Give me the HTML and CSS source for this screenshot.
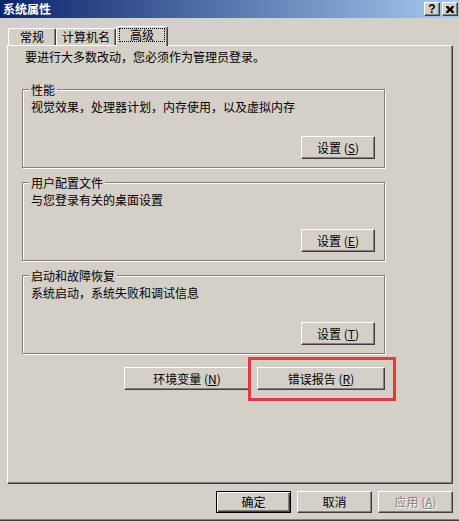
FILE: index.html
```html
<!DOCTYPE html>
<html lang="zh-CN">
<head>
  <meta charset="UTF-8">
  <title>系统属性</title>
  <link rel="stylesheet" href="styles.css">
</head>
<body>
  <div class="window">
    <div class="titlebar">
      <span class="title">系统属性</span>
      <div class="caption-btns">
        <span class="cap-btn help">?</span>
        <span class="cap-btn">
          <svg width="8" height="7" viewBox="0 0 8 7">
            <path d="M0 0h2l2 2 2-2h2v1l-2 2.5 2 2.5v1h-2l-2-2-2 2h-2v-1l2-2.5-2-2.5z" fill="#000"/>
          </svg>
        </span>
      </div>
    </div>

    <div class="tabs">
      <div class="tab tab-general">常规</div>
      <div class="tab tab-computer">计算机名</div>
      <div class="tab tab-advanced active"><span class="focus">高级</span></div>
    </div>

    <div class="panel">
      <p class="intro">要进行大多数改动，您必须作为管理员登录。</p>

      <fieldset class="group">
        <legend>性能</legend>
        <p>视觉效果，处理器计划，内存使用，以及虚拟内存</p>
        <button class="btn set-btn">设置 (<u>S</u>)</button>
      </fieldset>

      <fieldset class="group">
        <legend>用户配置文件</legend>
        <p>与您登录有关的桌面设置</p>
        <button class="btn set-btn">设置 (<u>E</u>)</button>
      </fieldset>

      <fieldset class="group">
        <legend>启动和故障恢复</legend>
        <p>系统启动，系统失败和调试信息</p>
        <button class="btn set-btn">设置 (<u>T</u>)</button>
      </fieldset>

      <div class="extra-row">
        <button class="btn env-btn">环境变量 (<u>N</u>)</button>
        <span class="marked">
          <button class="btn report-btn">错误报告 (<u>R</u>)</button>
          <span class="highlight"></span>
        </span>
      </div>
    </div>

    <div class="actions">
      <button class="btn action default">确定</button>
      <button class="btn action">取消</button>
      <button class="btn action disabled">应用 (<u>A</u>)</button>
    </div>
  </div>
</body>
</html>
```

FILE: styles.css
```css
body {
  margin: 0;
  background: #D4D0C8;
  font-family: "Noto Sans CJK SC", "Liberation Sans", sans-serif;
  font-size: 12px;
  color: #000;
}

.window {
  box-sizing: border-box;
  height: 521px;
  display: flex;
  flex-direction: column;
  border-bottom: 1px solid #404040;
  box-shadow: inset 0 -1px #808080;
}

.titlebar {
  height: 18px;
  display: flex;
  align-items: center;
  justify-content: space-between;
  padding: 0 1px 0 3px;
  background: linear-gradient(to right, #0A246A, #A6CAF0);
}

.title {
  color: #fff;
  font-weight: bold;
  line-height: 18px;
}

.caption-btns {
  display: flex;
  gap: 2px;
}

.cap-btn {
  box-sizing: border-box;
  width: 16px;
  height: 14px;
  display: flex;
  align-items: center;
  justify-content: center;
  background: #D4D0C8;
  border: 1px solid;
  border-color: #fff #404040 #404040 #fff;
  box-shadow: inset -1px -1px #808080;
}

.cap-btn.help {
  font-family: "Liberation Sans", sans-serif;
  font-weight: bold;
  font-size: 12px;
  line-height: 12px;
}

.tabs {
  height: 27px;
  display: flex;
  align-items: flex-end;
  padding-left: 8px;
}

.tab {
  box-sizing: border-box;
  height: 17px;
  padding-top: 1px;
  line-height: 14px;
  text-align: center;
  border: 1px solid;
  border-bottom: none;
  border-color: #fff #404040 transparent #fff;
  border-radius: 2px 2px 0 0;
  box-shadow: inset -1px 0 #808080;
}

.tab-general {
  width: 48px;
}

.tab-computer {
  width: 60px;
}

.tab-advanced {
  width: 52px;
}

.tab.active {
  position: relative;
  z-index: 1;
  height: 20px;
  margin-bottom: -1px;
  padding-top: 1px;
  background: #D4D0C8;
}

.focus {
  display: inline-block;
  padding: 0 10px;
  line-height: 12px;
  border: 1px dotted #000;
}

.panel {
  box-sizing: border-box;
  height: 439px;
  margin: 0 6px 0 7px;
  padding: 4px 0 0 14px;
  border: 1px solid;
  border-color: #fff #404040 #404040 #fff;
  box-shadow: inset -1px -1px #808080;
}

.intro {
  margin: 0;
  padding-left: 3px;
  line-height: 14px;
}

.group {
  box-sizing: border-box;
  width: 363px;
  min-width: 0;
  margin: 7px 0 0;
  padding: 3px 9px 8px 8px;
  display: flex;
  flex-direction: column;
  border: 1px solid #808080;
  box-shadow: inset 1px 1px #fff, 1px 1px #fff;
}

.group:first-of-type {
  margin-top: 18px;
}

.group legend {
  margin-left: -2px;
  padding: 0 2px;
  line-height: 15px;
  background: #D4D0C8;
}

.group p {
  margin: 0;
  line-height: 14px;
}

.btn {
  box-sizing: border-box;
  height: 23px;
  padding: 0;
  font-family: inherit;
  font-size: 12px;
  line-height: 14px;
  color: #000;
  background: #D4D0C8;
  border: 1px solid;
  border-color: #fff #404040 #404040 #fff;
  box-shadow: inset -1px -1px #808080;
}

.set-btn {
  align-self: flex-end;
  width: 74px;
  margin-top: 22px;
}

.extra-row {
  width: 363px;
  margin-top: 13px;
  display: flex;
  justify-content: flex-end;
  gap: 7px;
}

.env-btn {
  width: 126px;
}

.marked {
  position: relative;
  display: flex;
}

.report-btn {
  width: 128px;
}

.highlight {
  position: absolute;
  top: -10px;
  left: -9px;
  right: -11px;
  bottom: -11px;
  border: 3px solid #E5393A;
  pointer-events: none;
}

.actions {
  display: flex;
  justify-content: flex-end;
  gap: 6px;
  padding: 7px 6px 0 0;
}

.action {
  width: 75px;
  height: 22px;
}

.action.default {
  border-color: #000;
  box-shadow: inset 1px 1px #fff, inset -1px -1px #404040, inset -2px -2px #808080;
}

.action.disabled {
  color: #808080;
  text-shadow: 1px 1px #fff;
}
```
